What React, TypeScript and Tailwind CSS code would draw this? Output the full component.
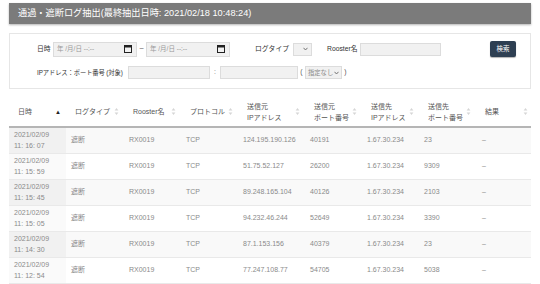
import { ReactNode } from "react"

type Row = {
    date: string
    time: string
    srcIp: string
    srcPort: string
    dstPort: string
}

const rows: Row[] = [
    { date: "2021/02/09", time: "11: 16: 07", srcIp: "124.195.190.126", srcPort: "40191", dstPort: "23" },
    { date: "2021/02/09", time: "11: 15: 59", srcIp: "51.75.52.127", srcPort: "26200", dstPort: "9309" },
    { date: "2021/02/09", time: "11: 15: 45", srcIp: "89.248.165.104", srcPort: "40126", dstPort: "2103" },
    { date: "2021/02/09", time: "11: 15: 05", srcIp: "94.232.46.244", srcPort: "52649", dstPort: "3390" },
    { date: "2021/02/09", time: "11: 14: 30", srcIp: "87.1.153.156", srcPort: "40379", dstPort: "23" },
    { date: "2021/02/09", time: "11: 12: 54", srcIp: "77.247.108.77", srcPort: "54705", dstPort: "5038" },
]

function CalendarIcon() {
    return (
        <svg width="8" height="8" viewBox="0 0 8 8">
            <rect x="0.5" y="0.5" width="7" height="7" fill="none" stroke="#222" strokeWidth="1" />
            <rect x="0.5" y="0.5" width="7" height="2" fill="#222" />
        </svg>
    )
}

function Chevron() {
    return (
        <svg width="5" height="4" viewBox="0 0 5 4">
            <path d="M0.5 0.8 L2.5 3 L4.5 0.8" fill="none" stroke="#666" strokeWidth="0.9" />
        </svg>
    )
}

function SortIcon() {
    return (
        <svg width="5" height="9" viewBox="0 0 5 9" className="shrink-0">
            <path d="M0.6 3.4 L2.5 1 L4.4 3.4 Z" fill="#d6d6d6" />
            <path d="M0.6 5.6 L2.5 8 L4.4 5.6 Z" fill="#d6d6d6" />
        </svg>
    )
}

function DateBox() {
    return (
        <div className="w-[84px] h-[15px] shrink-0 bg-[#f1f1f1] border border-[#dcdcdc] flex items-center justify-between pl-[3px] pr-[4px] text-[6.5px] text-[#999] whitespace-nowrap">
            <span>年 /月/日 --:--</span>
            <CalendarIcon />
        </div>
    )
}

function Th({ children, sorted, last }: { children: ReactNode; sorted?: boolean; last?: boolean }) {
    return (
        <th className="font-normal text-left align-middle p-0">
            <div className={`flex items-center justify-between pl-[9px] ${last ? "pr-[3px]" : "pr-[5px]"} leading-[11px]`}>
                <span className="whitespace-nowrap">{children}</span>
                {sorted ? <span className="text-[6px] text-[#222] leading-none">▲</span> : <SortIcon />}
            </div>
        </th>
    )
}

export default function App() {
    return (
        <div className="w-[540px] h-[284px] overflow-hidden bg-white px-[9px] pt-[3px] font-['Liberation_Sans','Noto_Sans_CJK_JP',sans-serif]">
            <div className="h-[21px] bg-[#7b7b7b] shadow-[0_1px_2px_rgba(0,0,0,0.3)] flex items-center pl-[9px] text-white text-[9.2px] whitespace-nowrap">
                通過・遮断ログ抽出(最終抽出日時: 2021/02/18 10:48:24)
            </div>

            <div className="mt-[9px] h-[56px] border border-[#e6e6e6] text-[6.8px] text-[#333] flex flex-col whitespace-nowrap">
                <div className="flex items-center h-[16px] mt-[7px] pl-[27px]">
                    <span className="w-[16px] shrink-0">日時</span>
                    <DateBox />
                    <span className="w-[9px] shrink-0 text-center text-[8px] text-[#555]">~</span>
                    <DateBox />
                    <span className="ml-[25px] w-[38px] shrink-0">ログタイプ</span>
                    <div className="w-[19px] h-[13px] shrink-0 bg-[#f1f1f1] border border-[#dcdcdc] flex items-center justify-end pr-[3px]">
                        <Chevron />
                    </div>
                    <span className="ml-[15px] w-[33px] shrink-0">Rooster名</span>
                    <div className="w-[81px] h-[13px] shrink-0 bg-[#f1f1f1] border border-[#dcdcdc]" />
                    <button className="ml-[49px] w-[26px] h-[16px] shrink-0 bg-[#2e3f52] rounded-[2px] text-white text-[6.5px] shadow-[0_1px_1px_rgba(0,0,0,0.3)]">
                        検索
                    </button>
                </div>
                <div className="flex items-center h-[15px] mt-[8px] pl-[27px]">
                    <span className="w-[91px] shrink-0 text-[6.3px] tracking-[-0.1px]">IPアドレス：ポート番号 (対象)</span>
                    <div className="w-[82px] h-[13px] shrink-0 bg-[#f1f1f1] border border-[#dcdcdc]" />
                    <span className="w-[10px] shrink-0 text-center text-[#777]">:</span>
                    <div className="w-[78px] h-[13px] shrink-0 bg-[#f1f1f1] border border-[#dcdcdc]" />
                    <span className="w-[7px] shrink-0 text-center text-[#555]">(</span>
                    <div className="w-[37px] h-[13px] shrink-0 bg-[#f1f1f1] border border-[#dcdcdc] flex items-center justify-between pl-[2px] pr-[2px] text-[#888] text-[6.3px]">
                        <span>指定なし</span>
                        <Chevron />
                    </div>
                    <span className="w-[7px] shrink-0 text-center text-[#555]">)</span>
                </div>
            </div>

            <table className="mt-[8px] w-[522px] table-fixed border-collapse text-[7px]">
                <colgroup>
                    <col className="w-[57px]" />
                    <col className="w-[58px]" />
                    <col className="w-[57px]" />
                    <col className="w-[57px]" />
                    <col className="w-[67px]" />
                    <col className="w-[57px]" />
                    <col className="w-[57px]" />
                    <col className="w-[57px]" />
                    <col className="w-[55px]" />
                </colgroup>
                <thead>
                    <tr className="h-[30px] border-b-2 border-[#b5b5b5] text-[#555]">
                        <Th sorted>日時</Th>
                        <Th>ログタイプ</Th>
                        <Th>Rooster名</Th>
                        <Th>プロトコル</Th>
                        <Th>送信元<br />IPアドレス</Th>
                        <Th>送信元<br />ポート番号</Th>
                        <Th>送信先<br />IPアドレス</Th>
                        <Th>送信先<br />ポート番号</Th>
                        <Th last>結果</Th>
                    </tr>
                </thead>
                <tbody className="text-[#8a8a8a]">
                    {rows.map((row, index) => {
                        const odd = index % 2 === 0
                        return (
                            <tr key={index} className={`h-[26px] border-b border-[#e9e9e9] ${odd ? "bg-[#f9f9f9]" : "bg-white"}`}>
                                <td className={`pl-[5px] leading-[11px] align-middle ${odd ? "bg-[#f1f1f1]" : "bg-[#fafafa]"}`}>
                                    {row.date}<br />{row.time}
                                </td>
                                <td className="pl-[5px]">遮断</td>
                                <td className="pl-[5px]">RX0019</td>
                                <td className="pl-[5px]">TCP</td>
                                <td className="pl-[5px]">{row.srcIp}</td>
                                <td className="pl-[5px]">{row.srcPort}</td>
                                <td className="pl-[5px]">1.67.30.234</td>
                                <td className="pl-[5px]">{row.dstPort}</td>
                                <td className="pl-[6px]">–</td>
                            </tr>
                        )
                    })}
                </tbody>
            </table>
        </div>
    )
}
